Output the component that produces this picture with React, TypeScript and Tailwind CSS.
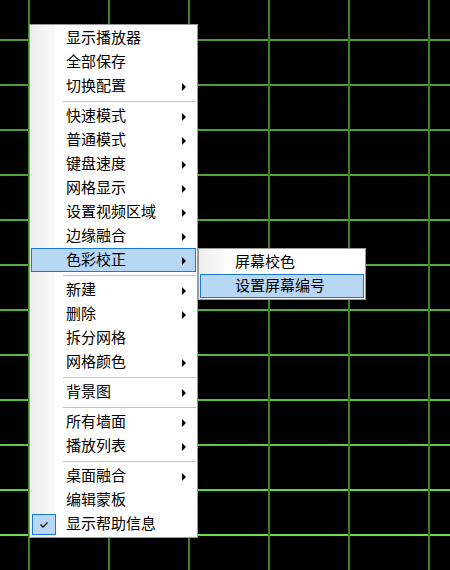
import React from 'react';

type Entry = { label?: string; sub?: boolean; sep?: boolean; active?: boolean; checked?: boolean };

const mainItems: Entry[] = [
  { label: '显示播放器' },
  { label: '全部保存' },
  { label: '切换配置', sub: true },
  { sep: true },
  { label: '快速模式', sub: true },
  { label: '普通模式', sub: true },
  { label: '键盘速度', sub: true },
  { label: '网格显示', sub: true },
  { label: '设置视频区域', sub: true },
  { label: '边缘融合', sub: true },
  { label: '色彩校正', sub: true, active: true },
  { sep: true },
  { label: '新建', sub: true },
  { label: '删除', sub: true },
  { label: '拆分网格' },
  { label: '网格颜色', sub: true },
  { sep: true },
  { label: '背景图', sub: true },
  { sep: true },
  { label: '所有墙面', sub: true },
  { label: '播放列表', sub: true },
  { sep: true },
  { label: '桌面融合', sub: true },
  { label: '编辑蒙板' },
  { label: '显示帮助信息', checked: true },
];

const subItems: Entry[] = [{ label: '屏幕校色' }, { label: '设置屏幕编号', active: true }];

// horizontal lines get a bit brighter toward the bottom
const rowColors = ['#4d9a36', '#4d9c36', '#4ea036', '#4fa637', '#50ac38', '#51b038', '#52b439', '#55ba3a', '#58c23c', '#5ccb3e', '#61d640', '#66e042'];

function Grid() {
  const cols = [28, 108, 188, 268, 348, 428];
  return (
    <svg className="absolute inset-0" width="450" height="570">
      {rowColors.map((c, i) => (
        <rect key={'h' + i} x="0" y={39 + i * 45} width="450" height="2" fill={c} />
      ))}
      {cols.map((x) => (
        <rect key={'v' + x} x={x} y="0" width="2" height="570" fill="#3a8328" />
      ))}
    </svg>
  );
}

function Arrow() {
  return (
    <svg className="absolute right-[9px] top-[8px]" width="4" height="8" viewBox="0 0 4 8">
      <path d="M0 0 L4 4 L0 8 Z" fill="#000" />
    </svg>
  );
}

function Item({ e }: { e: Entry }) {
  if (e.sep) {
    return (
      <div className="h-[6px] flex items-center pl-[32px]">
        <div className="h-px w-full bg-[#c2c2c2]" />
      </div>
    );
  }
  return (
    <div
      className={`relative h-6 flex items-center pl-[34px] pb-[4px] border ${
        e.active ? 'bg-[#b7d7f4] border-[#1a78d6]' : 'border-transparent'
      }`}
    >
      {e.checked && (
        <div className="absolute left-0 top-px w-6 h-[21px] bg-[#b7d7f4] border border-[#1a78d6] flex items-center justify-center">
          <svg width="8" height="6" viewBox="0 0 8 6">
            <path d="M0.5 2.5 L3 5 L7.5 0.5" stroke="#000" strokeWidth="1.3" fill="none" />
          </svg>
        </div>
      )}
      <span className="text-[15px] leading-none text-black whitespace-nowrap">{e.label}</span>
      {e.sub && <Arrow />}
    </div>
  );
}

function Menu({ items, className }: { items: Entry[]; className: string }) {
  return (
    <div className={`absolute bg-white border border-[#9a9a9a] p-px ${className}`}>
      <div className="absolute left-0 top-0 bottom-0 w-[25px] bg-gradient-to-r from-[#ededed] to-[#fafafa]" />
      <div className="relative flex flex-col">
        {items.map((e, i) => (
          <Item key={i} e={e} />
        ))}
      </div>
    </div>
  );
}

export default function App() {
  return (
    <div
      className="relative w-[450px] h-[570px] bg-black overflow-hidden"
      style={{ fontFamily: '"Noto Sans CJK SC", "Noto Sans", sans-serif' }}
    >
      <Grid />
      <Menu items={mainItems} className="left-[29px] top-[24px] w-[169px]" />
      <Menu items={subItems} className="left-[198px] top-[248px] w-[168px]" />
    </div>
  );
}
